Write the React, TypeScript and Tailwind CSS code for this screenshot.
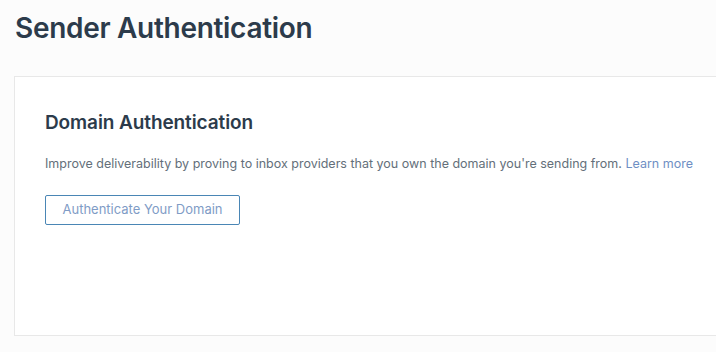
export default function App() {
  return (
    <div className="w-[716px] h-[352px] overflow-hidden bg-[#fcfcfc]" style={{ fontFamily: "Inter, 'Open Sans', sans-serif" }}>
      <div className="pl-[15px] pt-[11px]">
        <h1 className="text-[28px] leading-[34px] font-semibold text-[#2c3b4b] tracking-[-0.3px]">Sender Authentication</h1>
      </div>
      <div className="ml-[14px] mt-[31px] w-[720px] h-[260px] bg-white border border-[#e8e8e8] pl-[30px] pt-[33px]">
        <h2 className="text-[19px] leading-[26px] font-semibold text-[#2c3b4b] tracking-[-0.1px]">Domain Authentication</h2>
        <p className="mt-[19px] text-[12.5px] leading-[18px] text-[#646f7a] whitespace-nowrap">
          Improve deliverability by proving to inbox providers that you own the domain you're sending from.{" "}
          <span className="text-[#6f8fc4]">Learn more</span>
        </p>
        <button className="mt-[22px] w-[195px] h-[30px] border border-[#4a86b5] rounded-[2px] text-[13px] text-[#7f9cc6] bg-white">
          Authenticate Your Domain
        </button>
      </div>
    </div>
  );
}
